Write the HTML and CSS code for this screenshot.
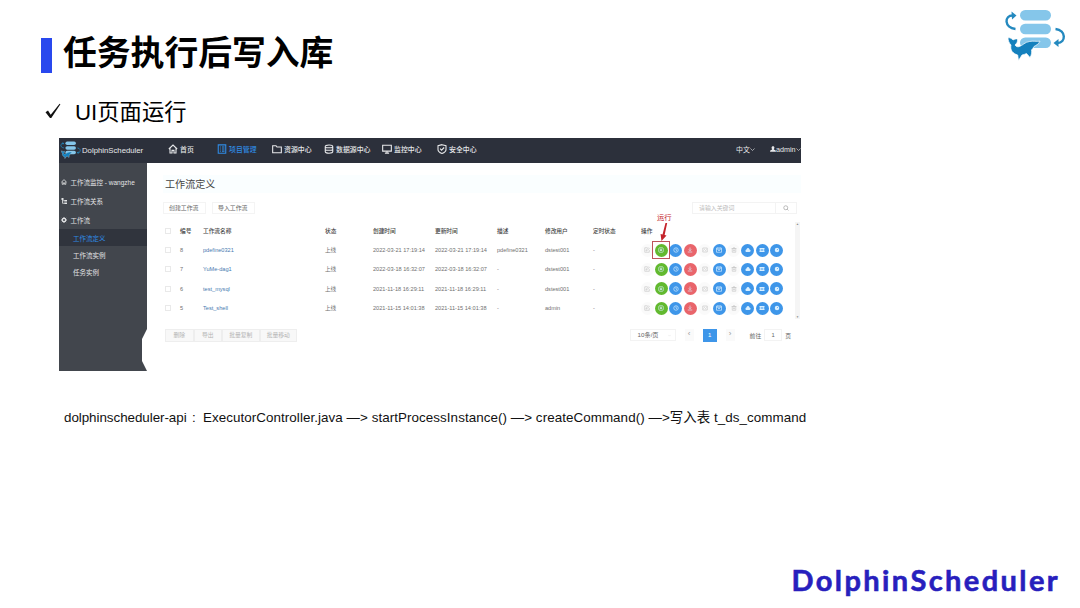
FILE: index.html
```html
<!DOCTYPE html>
<html lang="zh-CN">
<head>
<meta charset="utf-8">
<title>任务执行后写入库</title>
<link rel="stylesheet" href="styles.css">
</head>
<body>
<svg class="defs" width="0" height="0">
  <symbol id="home" viewBox="0 0 12 12"><path d="M1 6 6 1.3 11 6M2.4 5v5.7h2.4V7.6h2.4v3.1h2.4V5"/></symbol>
  <symbol id="project" viewBox="0 0 12 12"><path d="M1.5 1h9v10h-9zM3.5 3.5h1M6 3.5h3M3.5 6h1M6 6h3M3.5 8.5h1M6 8.5h3"/></symbol>
  <symbol id="folder" viewBox="0 0 12 12"><path d="M.8 2h4l1.2 1.6h5.2v6.9H.8z"/></symbol>
  <symbol id="database" viewBox="0 0 12 12"><path d="M1.5 3c0-2.4 9-2.4 9 0v6.4c0 2.2-9 2.2-9 0zM1.5 3.2c0 1.8 9 1.8 9 0M1.5 6.300c0 1.7 9 1.7 9 0"/></symbol>
  <symbol id="monitor" viewBox="0 0 12 12"><path d="M.8 1.5h10.4v7H.8zM6 8.5v2.2M3.5 10.9h5"/></symbol>
  <symbol id="shield" viewBox="0 0 12 12"><path d="M6 .8 10.8 2v4.5c0 2.4-2.4 4-4.8 4.9C3.600 10.500 1.200 8.900 1.200 6.500V2zM3.700 5.600 5.500 7.400 8.600 4.200"/></symbol>
  <symbol id="down" viewBox="0 0 12 12"><path d="M1 3.500 6 8.500 11 3.500"/></symbol>
  <symbol id="tree" viewBox="0 0 12 12"><path class="solid" d="M1 0h4v4H1zM7 4h5v3H7zM7 9h5v3H7z"/><path d="M3 3v7.500h5M3 5.500h5"/></symbol>
  <symbol id="gear" viewBox="0 0 12 12"><circle cx="6" cy="6" r="3.200" stroke-width="2.400"/><path stroke-width="2" d="M6 0v2M6 10v2M0 6h2M10 6h2M1.800 1.800l1.400 1.400M8.800 8.800l1.400 1.400M1.800 10.200l1.400-1.400M8.800 3.200l1.400-1.400"/></symbol>
  <symbol id="user" viewBox="0 0 12 12"><path class="solid" d="M6 .5c4 0 3 5 1.500 6 .5 1.500 4.500 1 4.500 5H0c0-4 4-3.500 4.500-5C3 5.500 2 .5 6 .5z"/></symbol>
  <symbol id="search" viewBox="0 0 12 12"><circle cx="5.500" cy="5.500" r="4"/><path d="M8.500 8.500 11 11"/></symbol>
  <symbol id="edit" viewBox="0 0 12 12"><path d="M7 1.500H1.500v9h9V6M4 8l.5-2L9 1.500 10.500 3 6 7.500z"/></symbol>
  <symbol id="run" viewBox="0 0 12 12"><rect x="1.500" y="1.500" width="9" height="9" rx="2"/><path d="M4 4.500h4M4 7h4M6 4v4"/></symbol>
  <symbol id="clock" viewBox="0 0 12 12"><circle cx="6" cy="6" r="4.500"/><path d="M6 3v3l2 1.500"/></symbol>
  <symbol id="offline" viewBox="0 0 12 12"><path d="M6 1v6M3.500 5 6 7.500 8.500 5M1.500 10h9"/></symbol>
  <symbol id="copy" viewBox="0 0 12 12"><path d="M1.500 2h9v8h-9zM3 7l2-2 2 2 2-2"/></symbol>
  <symbol id="calendar" viewBox="0 0 12 12"><path d="M1 2h10v8.500H1zM1 4.500h10M4 7h4M3.500 1v2M8.500 1v2"/></symbol>
  <symbol id="trash" viewBox="0 0 12 12"><path d="M2.500 3h7v7.500h-7zM1 3h10M4 1.500h4M5 5v3.500M7 5v3.500"/></symbol>
  <symbol id="cloud" viewBox="0 0 12 12"><path class="solid" d="M1 7c0-2 2-2 2-2 1-4 5-4 6 0 3 0 3 5 0 5H3C1.500 10 1 9 1 7z"/></symbol>
  <symbol id="branch" viewBox="0 0 12 12"><path class="solid" d="M1 2h10v3H1zM1 7h10v3H1z"/><path d="M3 4v4M9 4v4"/></symbol>
  <symbol id="version" viewBox="0 0 12 12"><circle class="solid" cx="6" cy="6" r="4.500"/><path class="mark" d="M6 6l2.500-2.500"/></symbol>
  <symbol id="logo" viewBox="0 0 62 52">
    <g fill="#85c6ea"><rect x="16" y="1" width="31" height="10.500" rx="5.200"/><rect x="16" y="14.700" width="31" height="10.500" rx="5.200"/><rect x="16" y="28.400" width="31" height="10.500" rx="5.200"/></g>
    <g fill="none" stroke="#2489bf" stroke-width="2.400"><path d="M11.500 20C0 19 0 6 9 6.500"/><path d="M51.500 20c11 1 10.500 14 2 14"/></g>
    <path fill="#2489bf" d="M7.500 2.500 12.500 6.500 8 10.500zM54.500 30 49.500 34 54.500 38z"/>
    <path fill="#1480bd" stroke="#fff" stroke-width=".7" d="M4 28.500c2.500.3 4 1.200 5 2.500 1.500-1 3-1.300 4.500-1 .4 3-1 4.500-2.500 6 1 1.500 2.500 2.300 4.500 1.500 3-1 5.500-4.500 10-5 4-.8 6.500.2 10.500-.3-1 2.500-3.500 4-6 5.300-.8 1.500-1.500 2.500-2.500 3.500.5 2.500 0 5-1.500 7.500l-3.500-4c-1.500.7-3 1.200-4.500 1.500l-3.500 5.500-.8-5.500C8.500 44.500 6 41 7 36 5 34 4 31.500 4 28.500z"/>
  </symbol>
</svg>

<main class="slide">
  <header class="heading">
    <i class="bar"></i>
    <h1>任务执行后写入库</h1>
    <svg class="brand"><use href="#logo"/></svg>
  </header>
  <div class="subheading">
    <svg class="tick" viewBox="0 0 16 16"><path d="M.5 9.300 3 7.500 5.700 11.700 14.600.8 15.400 1.300 6.300 15 5 15z"/></svg>
    <h2>UI页面运行</h2>
  </div>

  <section class="app">
    <div class="topbar">
      <svg class="mini"><use href="#logo"/></svg>
      <span class="product">DolphinScheduler</span>
      <nav class="nav">
        <a><svg><use href="#home"/></svg>首页</a>
        <a class="on"><svg><use href="#project"/></svg>项目管理</a>
        <a><svg><use href="#folder"/></svg>资源中心</a>
        <a><svg><use href="#database"/></svg>数据源中心</a>
        <a><svg><use href="#monitor"/></svg>监控中心</a>
        <a><svg><use href="#shield"/></svg>安全中心</a>
      </nav>
      <span class="lang">中文<svg><use href="#down"/></svg></span>
      <span class="account"><svg><use href="#user"/></svg>admin<svg><use href="#down"/></svg></span>
    </div>
    <div class="body">
      <aside class="side">
        <a><svg><use href="#home"/></svg>工作流监控 - wangzhe</a>
        <a><svg><use href="#tree"/></svg>工作流关系</a>
        <a><svg><use href="#gear"/></svg>工作流</a>
        <a class="sub on">工作流定义</a>
        <a class="sub">工作流实例</a>
        <a class="sub">任务实例</a>
        <svg class="notch" viewBox="0 0 6 42"><path d="M6 0 1 10V32L6 42z"/></svg>
      </aside>
      <div class="content">
        <h3>工作流定义</h3>
        <div class="tools">
          <span class="btn">创建工作流</span><span class="btn">导入工作流</span>
          <span class="search"><em>请输入关键词</em><b><svg><use href="#search"/></svg></b></span>
        </div>
        <div class="table" id="table">
          <div class="row head"><i class="box"></i><span>编号</span><span>工作流名称</span><span>状态</span><span>创建时间</span><span>更新时间</span><span>描述</span><span>修改用户</span><span>定时状态</span><span>操作</span></div>
          <div class="scroll"><i>▲</i><i>▼</i></div>
          <div class="callout"><span>运行</span><svg viewBox="0 0 20 20"><path d="M10.200 0 7.500 12.500 9.500 13.200 4.200 19 3.200 11.600 5.300 12 8.400 0z"/></svg><i></i></div>
        </div>
        <div class="foot">
          <span class="bulk">删除</span><span class="bulk">导出</span><span class="bulk wide">批量复制</span><span class="bulk wide">批量移动</span>
          <div class="pager"><span class="size">10条/页<svg><use href="#down"/></svg></span><span class="arrow">‹</span><span class="page">1</span><span class="arrow">›</span><span class="goto">前往</span><span class="num">1</span><span>页</span></div>
        </div>
      </div>
    </div>
  </section>

  <p class="flow"><span class="f1">dolphinscheduler-api</span><span class="f2">:</span><span class="f3">ExecutorController.java —&gt; startProcessInstance() —&gt; createCommand() —&gt;写入表 t_ds_command</span></p>
  <footer class="wordmark">DolphinScheduler</footer>
</main>
<script src="rows.js"></script>
</body>
</html>
```

FILE: rows.js
```js
const rows = [
  ['8', 'pdefine0321', '上线', '2022-03-21 17:19:14', '2022-03-21 17:19:14', 'pdefine0321', 'dstest001', '-'],
  ['7', 'YuMe-dag1', '上线', '2022-03-18 16:32:07', '2022-03-18 16:32:07', '-', 'dstest001', '-'],
  ['6', 'test_mysql', '上线', '2021-11-18 16:29:11', '2021-11-18 16:29:11', '-', 'dstest001', '-'],
  ['5', 'Test_shell', '上线', '2021-11-15 14:01:38', '2021-11-15 14:01:38', '-', 'admin', '-']
];
const actions = [
  ['edit', 'off'], ['run', 'green'], ['clock', 'blue'], ['offline', 'red'], ['copy', 'off'],
  ['calendar', 'blue'], ['trash', 'off'], ['cloud', 'blue'], ['branch', 'blue'], ['version', 'blue']
];
const ops = actions.map(([icon, tone]) => `<i class="op ${tone}"><svg><use href="#${icon}"/></svg></i>`).join('');
document.querySelector('.row.head').insertAdjacentHTML('afterend', rows.map(cells =>
  `<div class="row"><i class="box"></i>${cells.map(c => `<span>${c}</span>`).join('')}<div class="ops">${ops}</div></div>`
).join(''));
```

FILE: styles.css
```css
* { box-sizing: border-box; }
body { margin: 0; background: #fff; color: #000; font-family: "Liberation Sans", "Noto Sans CJK SC", sans-serif; }
h1, h2, h3, p { margin: 0; font-weight: 400; }
i, em { font-style: normal; }
.defs { position: absolute; }
svg { fill: none; stroke: currentColor; stroke-width: 1.1; }
.solid { fill: currentColor; stroke: none; }
.slide { width: 1080px; height: 608px; overflow: hidden; display: flex; flex-direction: column; }

.heading { display: flex; height: 92px; padding: 0 14px 0 41px; flex: none; }
.bar { width: 11px; height: 35px; margin: 38px 11px 0 0; background: #2948ee; }
h1 { font: 700 33.8px/50px "Noto Sans CJK SC", sans-serif; padding-top: 26px; flex: 1; white-space: nowrap; }
.brand { width: 62px; height: 52px; margin-top: 9px; stroke: none; }
.subheading { display: flex; height: 46px; padding: 0 0 0 45px; flex: none; }
.tick { width: 16px; height: 16px; margin: 11px 14px 0 0; fill: #111; stroke: none; }
h2 { font-size: 22.3px; line-height: 42px; white-space: nowrap; }

.app { width: 742px; height: 233px; margin-left: 59px; flex: none; font-size: 6.9px; color: #555; }
.topbar { display: flex; align-items: center; height: 25px; background: #2c303b; color: #e7e8ea; white-space: nowrap; padding-bottom: 3px; }
.mini { width: 21px; height: 18px; margin: 2px 1px 0 1px; stroke: none; }
.product { width: 86px; font-size: 7.75px; padding-top: 2px; }
.nav { display: grid; grid-template-columns: 49px 55px 52px 58px 55px 50px; flex: 1; font-weight: 500; }
.nav a { display: flex; align-items: center; gap: 2px; }
.nav svg { width: 10px; height: 10px; stroke-width: 1.3; }
.on { color: #2f8be6; }
.lang { width: 34px; display: flex; align-items: center; }
.lang svg, .account svg { width: 5px; height: 5px; stroke-width: 1.5; }
.account { width: 31px; font-size: 7.2px; display: flex; align-items: center; }
.account svg:first-child { width: 6px; height: 6px; }

.body { display: flex; height: 208px; }
.side { width: 88px; background: #42464d; color: #e2e3e5; padding-top: 9px; position: relative; white-space: nowrap; font-size: 6.5px; }
.side a { display: flex; align-items: center; gap: 3.5px; height: 19px; padding-left: 2px; }
.side a svg { width: 6px; height: 6px; stroke-width: 1.6; }
.side a.sub { height: 17px; padding-left: 14px; }
.side a.on { background: #30343d; color: #2f8be6; }
.side .notch { position: absolute; right: 0; bottom: 0; width: 6px; height: 42px; fill: #fff; stroke: none; }

.content { flex: 1; padding: 12px 0 0 16px; background: #fff; }
h3 { height: 18px; font-size: 10.1px; line-height: 20px; color: #444; padding-left: 2px; background: #fafeff; }
.tools { display: flex; height: 14px; margin-top: 8px; align-items: center; padding-right: 4px; font-size: 5.9px; color: #666; }
.btn { border: 1px solid #f4f4f4; height: 12px; line-height: 10px; padding: 0 4px 0 5px; margin-right: 6px; width: 43px; white-space: nowrap; }
.search { display: flex; margin-left: auto; width: 105px; height: 12px; border: 1px solid #f3f3f3; line-height: 10px; color: #bbb; }
.search em { flex: 1; padding-left: 6px; }
.search b { width: 21px; border-left: 1px solid #f3f3f3; display: flex; align-items: center; justify-content: center; }
.search svg { width: 6px; height: 6px; stroke: #888; }

.table { position: relative; height: 103px; margin-top: 4px; padding-top: 2px; }
.row { display: grid; grid-template-columns: 15px 23px 122px 48px 62px 62px 48px 48px 48px 1fr; align-items: center; height: 19.4px; padding-left: 2px; font-size: 5.6px; white-space: nowrap; color: #707070; }
.row.head { color: #444; font-weight: 500; font-size: 5.7px; }
.box { width: 6px; height: 6px; border: 1px solid #e9e9e9; }
.row:not(.head) > span:nth-child(3) { color: #4779b0; }
.ops { display: flex; margin-left: -.5px; gap: 1.43px; }
.op { width: 13px; height: 13px; border-radius: 50%; display: flex; align-items: center; justify-content: center; color: #d9efff; flex: none; }
.op svg { width: 6px; height: 6px; stroke-width: 1.3; }
.op.off { color: #c6c6c6; background: #fafafa; }
.op.green { background: #62b92f; }
.op.blue { background: #3e96e9; }
.op.red { background: #e9656b; }
.mark { stroke: #3e96e9; }
.scroll { position: absolute; right: 1px; top: 3px; width: 5px; height: 97px; background: #f5f5f5; display: flex; flex-direction: column; justify-content: space-between; align-items: center; font-size: 3px; color: #888; }
.callout { position: absolute; left: 489px; top: -6px; width: 20px; height: 50px; color: #c4242c; font-size: 7.3px; line-height: 10px; }
.callout span { padding-left: 5px; white-space: nowrap; }
.callout svg { display: block; width: 20px; height: 19px; margin-left: 5px; fill: #c4242c; stroke: none; }
.callout i { display: block; width: 18px; height: 18px; border: 1px solid #bd535b; margin-top: -1px; }

.foot { display: flex; align-items: center; height: 14px; margin-top: 6px; font-size: 5.8px; padding-left: 2px; }
.bulk { width: 28.500px; height: 13px; line-height: 11px; border: 1px solid #eee; background: #f8f8f8; color: #b5b5b5; text-align: center; }
.bulk.wide { width: 37.500px; }
.pager { display: flex; align-items: center; margin-left: auto; padding-right: 10px; color: #666; white-space: nowrap; }
.size { width: 46px; height: 12px; line-height: 10px; border: 1px solid #f3f3f3; padding-left: 7px; font-size: 6.200px; display: flex; align-items: center; justify-content: space-between; padding-right: 4px; }
.size svg { width: 3px; height: 3px; stroke: #ccc; }
.arrow { width: 9px; height: 12px; line-height: 10px; text-align: center; margin: 0 9px; color: #999; background: #fafafa; font-size: 8px; }
.page { width: 14px; height: 13px; line-height: 13px; text-align: center; background: #3e96e9; color: #fff; font-size: 6px; }
.goto { margin-left: 6px; }
.num { width: 18px; height: 12px; line-height: 10px; text-align: center; border: 1px solid #f3f3f3; margin: 0 3px; }

.flow { display: flex; margin: 37px 0 0 64px; font-size: 13.400px; line-height: 20px; white-space: nowrap; color: #111; }
.f1 { width: 128px; letter-spacing: -.05px; }
.f2 { width: 11px; }
.f3 { letter-spacing: .06px; }
.wordmark { margin: auto 20px 9px auto; font: 700 29px/38px Lato, sans-serif; letter-spacing: 2.400px; color: #281fbd; -webkit-text-stroke: .6px #281fbd; }
```
